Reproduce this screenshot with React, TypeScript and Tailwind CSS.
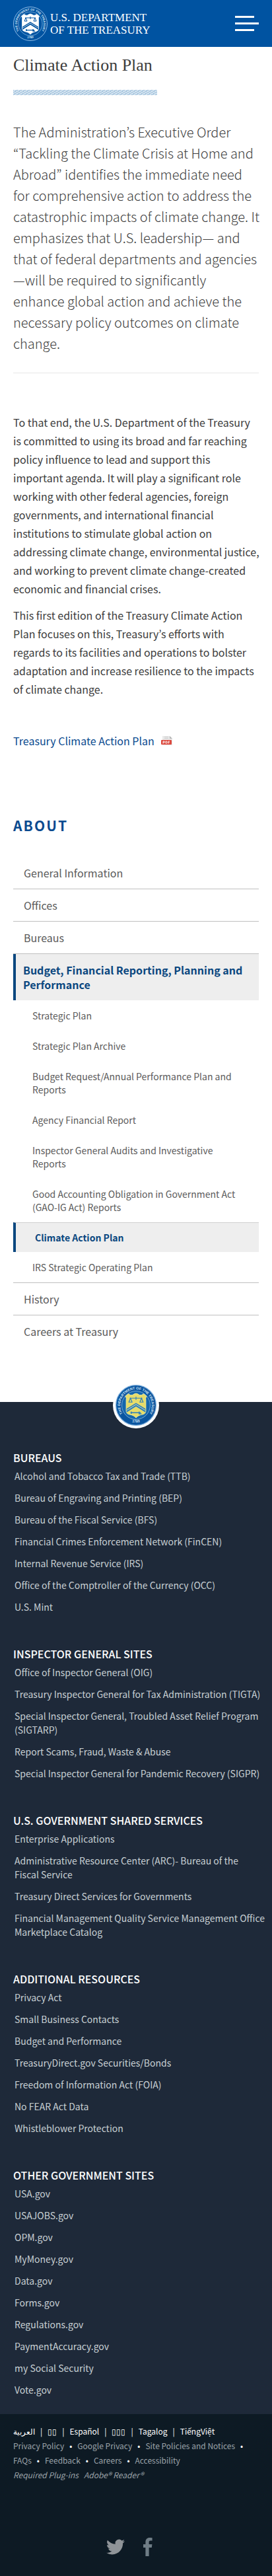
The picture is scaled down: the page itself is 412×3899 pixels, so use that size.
import React from "react";

const SANS = "font-['Noto_Sans_CJK_KR','Noto_Sans',sans-serif]";
const SERIF = "font-['Liberation_Serif',serif]";

type SealColors = {
  ring: string;
  inner: string;
  edge: string;
  letters: string;
  shield: string;
  mark: string;
  trim: string;
};

function Seal({ id, className, c }: { id: string; className: string; c: SealColors }) {
  return (
    <svg viewBox="0 0 104 104" className={className} role="img" aria-label="Treasury seal">
      <circle cx="52" cy="52" r="51" fill={c.ring} stroke={c.edge} strokeWidth="2" />
      <circle cx="52" cy="52" r="36" fill={c.inner} stroke={c.edge} strokeWidth="1.5" />
      <defs>
        <path id={`${id}-top`} d="M20 76 A40 40 0 1 1 84 76" />
        <path id={`${id}-bottom`} d="M30 90 A44 44 0 0 0 74 90" />
      </defs>
      <g fill={c.letters} fontFamily="Liberation Sans" fontWeight="bold" textAnchor="middle">
        <text fontSize="9">
          <textPath href={`#${id}-top`} startOffset="50%">THE DEPARTMENT OF THE TREASURY</textPath>
        </text>
        <text fontSize="9">
          <textPath href={`#${id}-bottom`} startOffset="50%">1789</textPath>
        </text>
      </g>
      <path
        d="M25 29 L33 23 Q38 28 43 26 Q49 22 52 22 Q55 22 61 26 Q66 28 71 23 L79 29 Q75 34 77 39 L77 66 Q77 73 70 75 Q57 77 52 84 Q47 77 34 75 Q27 73 27 66 L27 39 Q29 34 25 29Z"
        fill={c.shield}
        stroke={c.trim}
        strokeWidth="1.5"
      />
      <path d="M28 61 L52 46 L76 61 L76 70 L52 55 L28 70Z" fill={c.mark} />
      <path d="M28 65 L52 50 L76 65" fill="none" stroke={c.trim} strokeWidth="1.5" />
      <path d="M36 34 H68 M52 30 V38 M38 34 L34 44 H42Z M66 34 L62 44 H70Z" fill="none" stroke={c.mark} strokeWidth="2" />
      <path d="M38 71 H64 M40 68 V74 M60 68 V74 H66" fill="none" stroke={c.mark} strokeWidth="2.5" />
    </svg>
  );
}

function PdfIcon() {
  return (
    <svg viewBox="0 0 18 16" className="h-4 w-[18px]" aria-hidden="true">
      <path d="M2 1 H13 L17 5 V15 H2Z" fill="#e9e9e9" />
      <path d="M13 1 L17 5 H13Z" fill="#b5b5b5" />
      <path d="M5 2.5 H11 M5 4.5 H11" stroke="#cfcfcf" strokeWidth="1" />
      <rect x="0" y="7" width="16" height="7" rx="1" fill="#dc4a3f" />
      <path d="M3 12.5 V9 H5 V11 H3 M7 9 V12 H8.5 L9.3 10.5 L8.5 9Z M11 12.5 V9 H13 M11 10.8 H12.7" fill="none" stroke="#fff" strokeWidth="0.9" />
    </svg>
  );
}

const subItems = [
  "Strategic Plan",
  "Strategic Plan Archive",
  "Budget Request/Annual Performance Plan and Reports",
  "Agency Financial Report",
  "Inspector General Audits and Investigative Reports",
  "Good Accounting Obligation in Government Act (GAO-IG Act) Reports",
  "Climate Action Plan",
  "IRS Strategic Operating Plan",
];

const footerSections = [
  {
    title: "BUREAUS",
    links: [
      "Alcohol and Tobacco Tax and Trade (TTB)",
      "Bureau of Engraving and Printing (BEP)",
      "Bureau of the Fiscal Service (BFS)",
      "Financial Crimes Enforcement Network (FinCEN)",
      "Internal Revenue Service (IRS)",
      "Office of the Comptroller of the Currency (OCC)",
      "U.S. Mint",
    ],
  },
  {
    title: "INSPECTOR GENERAL SITES",
    links: [
      "Office of Inspector General (OIG)",
      "Treasury Inspector General for Tax Administration (TIGTA)",
      "Special Inspector General, Troubled Asset Relief Program (SIGTARP)",
      "Report Scams, Fraud, Waste & Abuse",
      "Special Inspector General for Pandemic Recovery (SIGPR)",
    ],
  },
  {
    title: "U.S. GOVERNMENT SHARED SERVICES",
    links: [
      "Enterprise Applications",
      "Administrative Resource Center (ARC)- Bureau of the Fiscal\u00a0Service",
      "Treasury Direct Services for Governments",
      "Financial Management Quality Service Management Office Marketplace\u00a0Catalog",
    ],
  },
  {
    title: "ADDITIONAL RESOURCES",
    links: [
      "Privacy Act",
      "Small Business Contacts",
      "Budget and Performance",
      "TreasuryDirect.gov Securities/Bonds",
      "Freedom of Information Act (FOIA)",
      "No FEAR Act Data",
      "Whistleblower Protection",
    ],
  },
  {
    title: "OTHER GOVERNMENT SITES",
    links: [
      "USA.gov",
      "USAJOBS.gov",
      "OPM.gov",
      "MyMoney.gov",
      "Data.gov",
      "Forms.gov",
      "Regulations.gov",
      "PaymentAccuracy.gov",
      "my Social Security",
      "Vote.gov",
    ],
  },
];

const languages = ["العربية", "▯▯", "Español", "▯▯▯", "Tagalog", "TiếngViệt"];
const policies = [
  "Privacy Policy",
  "Google Privacy",
  "Site Policies and Notices",
  "FAQs",
  "Feedback",
  "Careers",
  "Accessibility",
];

function Header() {
  return (
    <header className="flex h-[71px] items-center justify-between bg-[#0053a1] px-5">
      <a href="#home" className="flex items-center gap-1 text-white">
        <Seal
          id="top-seal"
          className="size-[52px]"
          c={{
            ring: "#0053a1",
            inner: "#0053a1",
            edge: "#8fbce6",
            letters: "#d5e6f7",
            shield: "#ffffff",
            mark: "#0053a1",
            trim: "#ffffff",
          }}
        />
        <span className={`text-[17px] leading-[19px] ${SERIF}`}>
          U.S. DEPARTMENT
          <br />
          OF THE TREASURY
        </span>
      </a>
      <button type="button" aria-label="Menu" className="flex w-9 flex-col gap-[7px]">
        <span className="h-[3px] w-[29px] bg-white" />
        <span className="h-[3px] w-9 bg-white" />
        <span className="h-[3px] w-[29px] bg-white" />
      </button>
    </header>
  );
}

function NavItem({ label, divider = true }: { label: string; divider?: boolean }) {
  return (
    <li className={divider ? "border-b border-[#c0c0c0]" : ""}>
      <a href="#section" className="block py-3.5 pl-4 text-[16px] leading-5 text-[#5b5b5b]">
        {label}
      </a>
    </li>
  );
}

function SideNav() {
  return (
    <nav aria-label="About" className="px-5 pt-[100px]">
      <h2 className="text-[21px] leading-7 font-bold tracking-widest text-[#0a4a8f]">ABOUT</h2>
      <ul className="pt-[34px]">
        <NavItem label="General Information" />
        <NavItem label="Offices" />
        <NavItem label="Bureaus" />
        <li className="border-b border-[#c0c0c0]">
          <a
            href="#budget"
            className="block border-l-4 border-[#0a477f] bg-[#eeeeee] py-[13px] pr-3 pl-[11px] text-[16px] leading-[22px] font-bold text-[#0a477f]"
          >
            Budget, Financial Reporting, Planning and Performance
          </a>
          <ul>
            {subItems.map((item) =>
              item === "Climate Action Plan" ? (
                <li key={item}>
                  <a
                    href="#plan"
                    aria-current="page"
                    className="block border-t border-l-4 border-t-[#d0d0d0] border-l-[#0a477f] bg-[#eeeeee] py-3 pl-[29px] text-[14px] leading-5 font-bold text-[#0a477f]"
                  >
                    {item}
                  </a>
                </li>
              ) : (
                <li key={item}>
                  <a href="#sub" className="block py-[13px] pr-6 pl-[29px] text-[14px] leading-5 text-[#5b5b5b]">
                    {item}
                  </a>
                </li>
              )
            )}
          </ul>
        </li>
        <NavItem label="History" />
        <NavItem label="Careers at Treasury" divider={false} />
      </ul>
    </nav>
  );
}

function Footer() {
  return (
    <footer className="relative mt-[83px] bg-[#1e2939]">
      <div className="absolute -top-[30px] left-1/2 flex size-[70px] -translate-x-1/2 items-center justify-center rounded-full bg-white">
        <Seal
          id="footer-seal"
          className="size-[62px]"
          c={{
            ring: "#0b559f",
            inner: "#1566ad",
            edge: "#7fb0dc",
            letters: "#cfe3f5",
            shield: "#e6dc6a",
            mark: "#2c7fbe",
            trim: "#f3ef9c",
          }}
        />
      </div>
      <div className="flex flex-col gap-12 pt-[72px] pr-2 pb-[26px] pl-5">
        {footerSections.map((section) => (
          <section key={section.title}>
            <h3 className="text-[16px] leading-6 font-medium text-white">{section.title}</h3>
            <ul className="flex flex-col gap-3 pt-1.5 pl-0.5">
              {section.links.map((link) => (
                <li key={link} className="text-[14px] leading-[21px] text-[#c8d0d4]">
                  <a href="#link">{link}</a>
                </li>
              ))}
            </ul>
          </section>
        ))}
      </div>
      <div className="bg-[#0d1a24] px-5 pt-[15px] pb-7 text-[12px] leading-[22px] text-[#9aa2a8]">
        <div className="flex items-center text-white">
          {languages.map((language, i) => (
            <React.Fragment key={language}>
              {i > 0 && <span className="px-2">|</span>}
              <a href="#language">{language}</a>
            </React.Fragment>
          ))}
        </div>
        <ul className="flex flex-wrap">
          {policies.map((policy, i) => (
            <li key={policy}>
              <a href="#policy">{policy}</a>
              {i < policies.length - 1 && <span className="px-2 text-white">•</span>}
            </li>
          ))}
        </ul>
        <p className="flex gap-2 italic">
          <a href="#plugins">Required Plug-ins</a>
          <a href="#reader">Adobe® Reader®</a>
        </p>
        <div className="flex justify-center gap-7 pt-[84px] pr-5">
          <a href="#twitter" aria-label="Twitter">
            <svg viewBox="0 0 24 24" className="size-7" fill="#8f9498" aria-hidden="true">
              <path d="M23.95 4.57a10 10 0 0 1-2.82.77 4.96 4.96 0 0 0 2.16-2.72c-.95.55-2 .95-3.13 1.18a4.92 4.92 0 0 0-8.38 4.48C7.69 8.1 4.07 6.13 1.64 3.16a4.9 4.9 0 0 0 1.52 6.57 4.9 4.9 0 0 1-2.23-.61v.06a4.92 4.92 0 0 0 3.95 4.83 5 5 0 0 1-2.21.08 4.94 4.94 0 0 0 4.6 3.42A9.87 9.87 0 0 1 0 19.54a14 14 0 0 0 7.55 2.21c9.05 0 14-7.5 14-13.98 0-.21 0-.42-.02-.63a9.94 9.94 0 0 0 2.42-2.57z" />
            </svg>
          </a>
          <a href="#facebook" aria-label="Facebook">
            <svg viewBox="0 0 14 28" className="h-7 w-3.5" fill="#6f7d86" aria-hidden="true">
              <path d="M13.6 0.2V4.6H11C9 4.6 8.6 5.6 8.6 7V10.1H13.4L12.8 15H8.6V28H3.4V15H0V10.1H3.4V6.5C3.4 2.4 5.9 0 9.7 0C11.4 0 13 0.1 13.6 0.2Z" />
            </svg>
          </a>
        </div>
      </div>
    </footer>
  );
}

export default function App() {
  return (
    <div className={`min-h-screen bg-[#0d1a24] ${SANS}`}>
      <div className="bg-white">
        <Header />
        <main className="px-5 pt-2">
          <h1 className={`text-[26px] leading-10 text-[#3d3d3d] ${SERIF}`}>Climate Action Plan</h1>
          <div className="mt-[17px] h-2 w-[218px] bg-[repeating-linear-gradient(150deg,#9dbfdc_0px,#9dbfdc_1px,#d3e3ef_1px,#d3e3ef_3px)]" />
          <p className="mt-10 text-[20px] leading-8 font-light text-[#3d3d3d]">
            The Administration’s Executive Order “Tackling the Climate Crisis at Home and Abroad” identifies the
            immediate need for comprehensive action to address the{" "}
            <span className="whitespace-nowrap">catastrophic impacts of climate change. It</span> emphasizes that U.S.
            leadership— and that of federal departments and agencies—will be required to significantly enhance global
            action and achieve the necessary policy outcomes on climate change.
          </p>
          <hr className="mt-7 border-[#e6e6e6]" />
          <div className="mt-[60px] flex flex-col gap-3 text-[16px] leading-7 text-[#3d3d3d]">
            <p>
              To that end, the U.S. Department of the Treasury is committed to using its broad and far reaching policy
              influence to lead and support this important agenda. It will play a significant role working with other
              federal agencies, foreign governments, and international financial institutions to stimulate global
              action on <span className="whitespace-nowrap">addressing climate change, environmental justice,</span>{" "}
              and working to prevent climate change-created economic and financial crises.
            </p>
            <p>
              This first edition of the Treasury Climate Action Plan focuses on this, Treasury’s efforts with regards
              to its facilities and operations to bolster adaptation and increase resilience to the impacts of climate
              change.
            </p>
          </div>
          <p className="mt-[50px] text-[16px] leading-7 text-[#0a4a8f]">
            <a href="#pdf" className="flex items-center gap-2.5">
              Treasury Climate Action Plan
              <PdfIcon />
            </a>
          </p>
        </main>
        <SideNav />
        <Footer />
      </div>
    </div>
  );
}
